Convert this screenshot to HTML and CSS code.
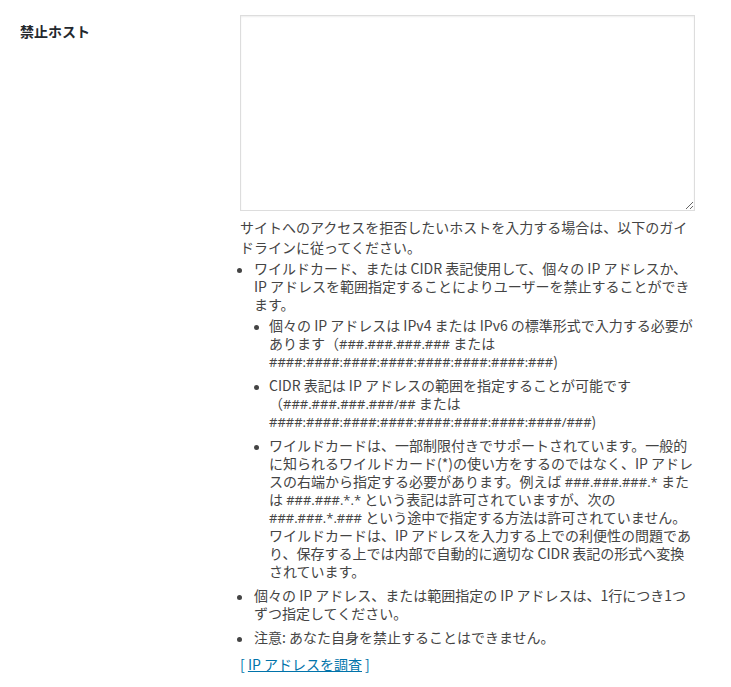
FILE: index.html
```html
<!DOCTYPE html>
<html lang="ja">
<head>
<meta charset="utf-8">
<title>禁止ホスト</title>
<link rel="stylesheet" href="styles.css">
</head>
<body>
<div class="form-row">
  <div class="label">禁止ホスト</div>
  <div class="field">
    <textarea class="hosts"></textarea>
    <p class="intro">サイトへのアクセスを拒否したいホストを入力する場合は、以下のガイドラインに従ってください。</p>
    <ul class="list">
      <li>ワイルドカード、または CIDR 表記使用して、個々の IP アドレスか、IP アドレスを範囲指定することによりユーザーを禁止することができます。
        <ul class="sub">
          <li>個々の IP アドレスは IPv4 または IPv6 の標準形式で入力する必要があります（<span class="ip">###.###.###.###</span> または <span class="ip">####:####:####:####:####:####:####:###</span>)</li>
          <li>CIDR 表記は IP アドレスの範囲を指定することが可能です（<span class="ip">###.###.###.###/##</span> または <span class="ip">####:####:####:####:####:####:####:####/###</span>)</li>
          <li>ワイルドカードは、一部制限付きでサポートされています。一般的に知られるワイルドカード(*)の使い方をするのではなく、IP アドレスの右端から指定する必要があります。例えば <span class="ip">###.###.###.*</span> または <span class="ip">###.###.*.*</span> という表記は許可されていますが、次の <span class="ip">###.###.*.###</span> という途中で指定する方法は許可されていません。ワイルドカードは、IP アドレスを入力する上での利便性の問題であり、保存する上では内部で自動的に適切な CIDR 表記の形式へ変換されています。</li>
        </ul>
      </li>
      <li>個々の IP アドレス、または範囲指定の IP アドレスは、1行につき1つずつ指定してください。</li>
      <li>注意: あなた自身を禁止することはできません。</li>
    </ul>
    <p class="lookup">[ <a href="#" class="lookup-link">IP アドレスを調査</a> ]</p>
  </div>
</div>
</body>
</html>
```

FILE: styles.css
```css
html, body {
  margin: 0;
  padding: 0;
  background: #fff;
}

body {
  font-family: "Noto Sans CJK JP", "Noto Sans", sans-serif;
  font-size: 14px;
  color: #444;
}

.form-row {
  display: grid;
  grid-template-columns: 220px 455px;
  padding-left: 20px;
}

.label {
  padding-top: 22px;
  line-height: 18px;
  font-weight: 700;
  color: #23282d;
}

.field {
  padding-top: 15px;
}

.hosts {
  display: block;
  box-sizing: border-box;
  width: 455px;
  height: 196px;
  margin: 0;
  padding: 4px 6px;
  border: 1px solid #ddd;
  border-radius: 0;
  box-shadow: inset 0 1px 2px rgba(0, 0, 0, 0.07);
  background: #fff;
  font: inherit;
}

.intro {
  margin: 7px 0 2px;
  line-height: 19.5px;
}

.list {
  list-style: none;
  margin: 2px 5px 0 0;
  padding: 0 0 0 14px;
  line-height: 18px;
}

.list li {
  margin: 0 0 6px;
}

.list li::before {
  content: "";
  display: inline-block;
  width: 5px;
  height: 5px;
  border-radius: 50%;
  background: #444;
  vertical-align: middle;
  margin: 0 12.5px 0 -17.5px;
}

.sub {
  list-style: none;
  margin: 3px -5px 0 0;
  padding: 0 0 0 15px;
}

.sub li::before {
  margin: 0 10px 0 -15px;
}

.ip {
  font-family: "Open Sans", "Noto Sans", sans-serif;
  font-size: 13px;
  line-height: 1;
}

.lookup {
  margin: 9px 0 0;
  line-height: 18px;
  color: #0073aa;
}

.lookup-link {
  color: #0073aa;
  text-decoration: underline;
}
```
